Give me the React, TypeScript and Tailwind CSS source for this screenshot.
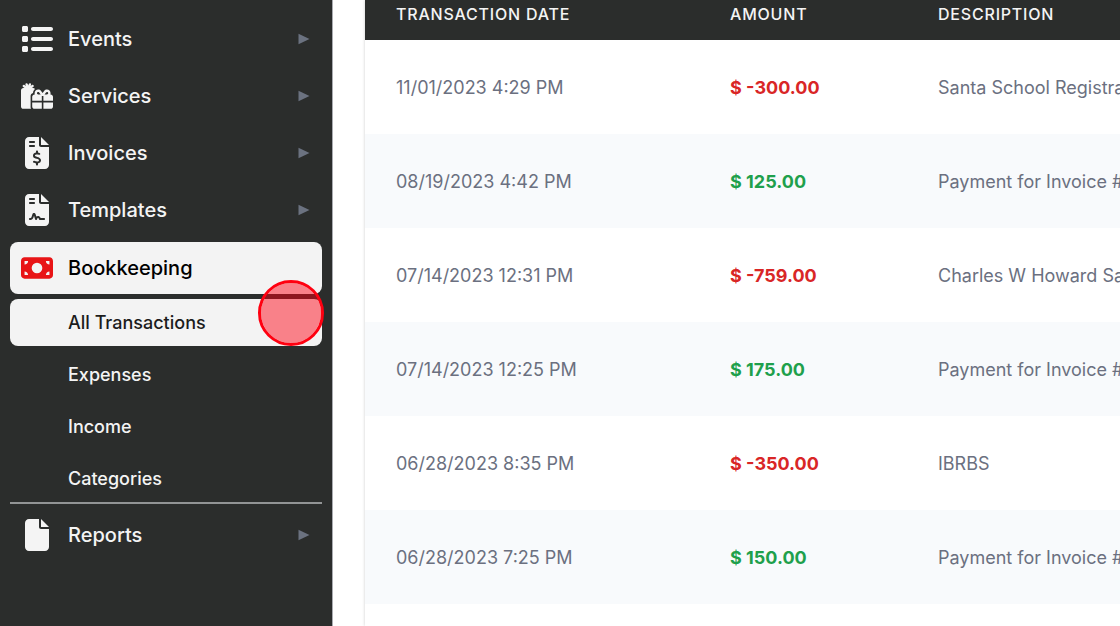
import type { ReactNode } from "react";
import { FaFile, FaFileContract, FaFileInvoiceDollar, FaGifts, FaList, FaMoneyBill } from "react-icons/fa6";

type Transaction = { date: string; amount: string; description: string };

const transactions: Transaction[] = [
  { date: "11/01/2023 4:29 PM", amount: "-300.00", description: "Santa School Registration" },
  { date: "08/19/2023 4:42 PM", amount: "125.00", description: "Payment for Invoice #" },
  { date: "07/14/2023 12:31 PM", amount: "-759.00", description: "Charles W Howard Santa School" },
  { date: "07/14/2023 12:25 PM", amount: "175.00", description: "Payment for Invoice #" },
  { date: "06/28/2023 8:35 PM", amount: "-350.00", description: "IBRBS" },
  { date: "06/28/2023 7:25 PM", amount: "150.00", description: "Payment for Invoice #" },
];

function Arrow() {
  return (
    <svg viewBox="0 0 12 12" className="h-3 w-3 fill-[#6b7280]" aria-hidden="true">
      <path d="M0.5 0.8 11.5 6 0.5 11.2Z" />
    </svg>
  );
}

function MenuItem({ icon, label }: { icon: ReactNode; label: string }) {
  return (
    <button
      type="button"
      className="flex h-[52px] w-full items-center gap-[15px] rounded-lg pr-3 pl-[11px] text-left text-xl font-medium text-[#f4f4f4]"
    >
      {icon}
      <span className="flex-1">{label}</span>
      <Arrow />
    </button>
  );
}

function SubItem({ label, active = false }: { label: string; active?: boolean }) {
  return (
    <a
      href="#"
      aria-current={active ? "page" : undefined}
      className={
        active
          ? "flex h-[47px] items-center rounded-lg bg-[#f3f3f3] pl-[58px] text-lg font-medium text-[#1c1c1c]"
          : "flex h-[47px] items-center rounded-lg pl-[58px] text-lg font-medium text-[#f4f4f4]"
      }
    >
      {label}
    </a>
  );
}

function Sidebar() {
  return (
    <aside className="w-[333px] shrink-0 border-r border-[#a9abb0] bg-[#2b2d2c] px-[10px] pt-[13px]">
      <nav className="flex flex-col gap-[5px]">
        <MenuItem icon={<FaList className="size-8" />} label="Events" />
        <MenuItem icon={<FaGifts className="size-8" />} label="Services" />
        <MenuItem icon={<FaFileInvoiceDollar className="size-8" />} label="Invoices" />
        <MenuItem icon={<FaFileContract className="size-8" />} label="Templates" />
        <div className="relative flex flex-col gap-[5px] border-b-2 border-[#929495] pt-px">
          <button
            type="button"
            aria-expanded="true"
            className="flex h-[52px] w-full items-center gap-[15px] rounded-lg bg-[#f3f3f3] pl-[11px] text-left text-xl font-medium text-black"
          >
            <FaMoneyBill className="size-8 text-[#e81416]" />
            Bookkeeping
          </button>
          <SubItem label="All Transactions" active />
          <SubItem label="Expenses" />
          <SubItem label="Income" />
          <SubItem label="Categories" />
          <span className="pointer-events-none absolute top-[39px] -right-[2px] size-[66px] rounded-full border-3 border-[#ff0010] bg-[#ff0010]/47 bg-clip-padding" />
        </div>
        <MenuItem icon={<FaFile className="size-8" />} label="Reports" />
      </nav>
    </aside>
  );
}

function TransactionTable() {
  return (
    <table className="w-full table-fixed text-left whitespace-nowrap">
      <thead className="bg-[#2b2d2c] text-base font-medium tracking-wider text-[#f4f4f4] uppercase">
        <tr className="h-10">
          <th scope="col" className="w-[334px] pb-3 pl-[31px] leading-4 font-medium">Transaction Date</th>
          <th scope="col" className="w-[208px] pb-3 pl-[31px] leading-4 font-medium">Amount</th>
          <th scope="col" className="pb-3 pl-[31px] leading-4 font-medium">Description</th>
        </tr>
      </thead>
      <tbody className="text-lg text-[#6b7080]">
        {transactions.map((t, i) => (
          <tr key={i} className="h-[94px] odd:bg-white even:bg-[#f8fafc]">
            <td className="pt-0.5 pl-[31px]">{t.date}</td>
            <td
              className={
                t.amount.startsWith("-")
                  ? "pt-0.5 pl-[31px] font-bold text-[#d92626]"
                  : "pt-0.5 pl-[31px] font-bold text-[#1fa04c]"
              }
            >
              $ {t.amount}
            </td>
            <td className="pt-0.5 pl-[31px]">{t.description}</td>
          </tr>
        ))}
      </tbody>
    </table>
  );
}

export default function App() {
  return (
    <div className="flex h-screen overflow-hidden bg-white font-['Inter','Liberation_Sans',sans-serif]">
      <Sidebar />
      <main className="min-w-0 flex-1 overflow-hidden pl-8">
        <div className="h-full shadow-[0_0_3px_rgba(0,0,0,0.2)]">
          <TransactionTable />
        </div>
      </main>
    </div>
  );
}
